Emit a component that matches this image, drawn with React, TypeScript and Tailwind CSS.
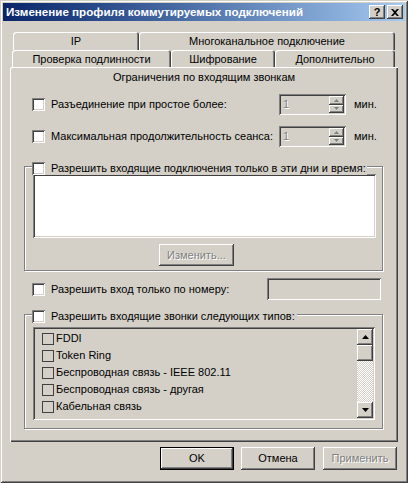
import React from 'react'

const raised = 'shadow-[inset_-1px_-1px_#404040,inset_1px_1px_#ffffff,inset_-2px_-2px_#808080,inset_2px_2px_#d4d0c8]'
const sunken = 'shadow-[inset_1px_1px_#808080,inset_-1px_-1px_#ffffff,inset_2px_2px_#404040,inset_-2px_-2px_#d4d0c8]'
const etched = 'border border-[#808080] shadow-[inset_1px_1px_#ffffff,1px_1px_#ffffff]'
const disabledText = 'text-[#808080] [text-shadow:1px_1px_#ffffff]'

function CheckBox() {
    return <div className={`w-[13px] h-[13px] shrink-0 bg-white ${sunken}`} />
}

function Arrow({ up, color = '#000000', size = 'big' }: { up: boolean; color?: string; size?: 'big' | 'small' }) {
    if (size === 'small') {
        return (
            <svg width="5" height="3" viewBox="0 0 5 3">
                <path d={up ? 'M2.5 0 L5 3 L0 3 Z' : 'M0 0 L5 0 L2.5 3 Z'} fill={color} />
            </svg>
        )
    }
    return (
        <svg width="7" height="4" viewBox="0 0 7 4">
            <path d={up ? 'M3.5 0 L7 4 L0 4 Z' : 'M0 0 L7 0 L3.5 4 Z'} fill={color} />
        </svg>
    )
}

function SpinBox() {
    return (
        <div className={`flex w-[67px] h-[21px] bg-[#d4d0c8] p-[2px] ${sunken}`}>
            <div className={`flex-1 pl-[2px] leading-[17px] ${disabledText}`}>1</div>
            <div className="flex flex-col w-[15px]">
                <div className={`flex-1 flex items-center justify-center ${raised}`}>
                    <Arrow up size="small" color="#808080" />
                </div>
                <div className={`flex-1 flex items-center justify-center ${raised}`}>
                    <Arrow up={false} size="small" color="#808080" />
                </div>
            </div>
        </div>
    )
}

function Tab({ label, width, height }: { label: string; width: number; height: number }) {
    return (
        <div
            className="flex items-center justify-center rounded-t-[3px] shadow-[inset_1px_1px_#ffffff,inset_-1px_0_#404040,inset_-2px_0_#808080] pt-[1px]"
            style={{ width, height }}
        >
            {label}
        </div>
    )
}

function Button({ label, isDefault, disabled }: { label: string; isDefault?: boolean; disabled?: boolean }) {
    const border = isDefault
        ? 'shadow-[inset_0_0_0_1px_#000000,inset_-2px_-2px_#404040,inset_2px_2px_#ffffff,inset_-3px_-3px_#808080]'
        : raised
    return (
        <div className={`w-[74px] h-[23px] flex items-center justify-center ${border} ${disabled ? disabledText : 'text-black'}`}>
            {label}
        </div>
    )
}

const deviceTypes = [
    'FDDI',
    'Token Ring',
    'Беспроводная связь - IEEE 802.11',
    'Беспроводная связь - другая',
    'Кабельная связь',
]

export default function App() {
    return (
        <div className="w-[408px] h-[483px] bg-[#d4d0c8] flex flex-col font-['Liberation_Sans',Arial,sans-serif] text-[11px] text-black shadow-[inset_1px_1px_#d4d0c8,inset_-1px_-1px_#404040,inset_2px_2px_#ffffff,inset_-2px_-2px_#808080] overflow-hidden">
            {/* Title bar */}
            <div className="mt-[3px] mx-[3px] h-[18px] flex items-center bg-gradient-to-r from-[#0a246a] to-[#a6caf0] pl-[3px] pr-[2px]">
                <span className="flex-1 text-white font-bold text-[11.6px] leading-none whitespace-nowrap">
                    Изменение профиля коммутируемых подключений
                </span>
                <div className={`w-[16px] h-[14px] flex items-center justify-center bg-[#d4d0c8] font-bold text-[11px] leading-none ${raised}`}>?</div>
                <div className={`ml-[2px] w-[16px] h-[14px] flex items-center justify-center bg-[#d4d0c8] ${raised}`}>
                    <svg width="8" height="7" viewBox="0 0 8 7">
                        <path d="M0 0 H2 L4 2 L6 0 H8 L5 3.5 L8 7 H6 L4 5 L2 7 H0 L3 3.5 Z" fill="#000" />
                    </svg>
                </div>
            </div>

            {/* Tabs */}
            <div className="mt-[11px] ml-[13px] flex">
                <Tab label="IP" width={126} height={18} />
                <Tab label="Многоканальное подключение" width={256} height={18} />
            </div>
            <div className="ml-[12px] flex">
                <Tab label="Проверка подлинности" width={159} height={17} />
                <Tab label="Шифрование" width={104} height={17} />
                <Tab label="Дополнительно" width={120} height={17} />
            </div>

            {/* Panel */}
            <div className="ml-[10px] w-[388px] h-[375px] flex flex-col rounded-tl-[2px] shadow-[inset_1px_1px_#ffffff,inset_-1px_-1px_#404040,inset_-2px_-2px_#808080]">
                <div className="h-[20px] flex items-center justify-center">Ограничения по входящим звонкам</div>

                <div className="mt-[7px] h-[21px] pl-[22px] flex items-center">
                    <CheckBox />
                    <span className="ml-[6px] w-[228px] whitespace-nowrap">Разъединение при простое более:</span>
                    <SpinBox />
                    <span className="ml-[8px]">мин.</span>
                </div>

                <div className="mt-[11px] h-[21px] pl-[22px] flex items-center">
                    <CheckBox />
                    <span className="ml-[6px] w-[228px] whitespace-nowrap">Максимальная продолжительность сеанса:</span>
                    <SpinBox />
                    <span className="ml-[8px]">мин.</span>
                </div>

                {/* Days and times group */}
                <div className={`relative mt-[19px] ml-[14px] w-[359px] h-[105px] flex flex-col ${etched}`}>
                    <div className="absolute -top-[5px] left-[7px] flex items-center bg-[#d4d0c8] pr-[1px] h-[13px]">
                        <CheckBox />
                        <span className="ml-[6px] whitespace-nowrap">Разрешить входящие подключения только в эти дни и время:</span>
                    </div>
                    <div className={`mt-[7px] ml-[8px] w-[343px] h-[64px] bg-white ${sunken}`} />
                    <div className="mt-[6px] ml-[134px]">
                        <div className={`w-[75px] h-[22px] flex items-center justify-center ${raised} ${disabledText}`}>Изменить...</div>
                    </div>
                </div>

                <div className="mt-[7px] h-[22px] pl-[22px] flex items-center">
                    <CheckBox />
                    <span className="ml-[6px] w-[216px] whitespace-nowrap">Разрешить вход только по номеру:</span>
                    <div className={`w-[114px] h-[22px] bg-[#d4d0c8] ${sunken}`} />
                </div>

                {/* Device types group */}
                <div className={`relative mt-[14px] ml-[14px] w-[359px] h-[115px] flex flex-col ${etched}`}>
                    <div className="absolute -top-[5px] left-[7px] flex items-center bg-[#d4d0c8] pr-[2px] h-[13px]">
                        <CheckBox />
                        <span className="ml-[6px] whitespace-nowrap">Разрешить входящие звонки следующих типов:</span>
                    </div>
                    <div className={`mt-[12px] ml-[8px] w-[342px] h-[93px] flex p-[2px] bg-[#d4d0c8] ${sunken}`}>
                        <div className="flex-1 flex flex-col pt-[1px] pl-[7px]">
                            {deviceTypes.map((t) => (
                                <div key={t} className="h-[17px] flex items-center">
                                    <div className="w-[12px] h-[12px] border border-[#404040] bg-[#d4d0c8]" />
                                    <span className="ml-[2px] whitespace-nowrap">{t}</span>
                                </div>
                            ))}
                        </div>
                        <div className="w-[16px] flex flex-col">
                            <div className={`h-[16px] flex items-center justify-center ${raised}`}>
                                <Arrow up />
                            </div>
                            <div className={`h-[16px] ${raised}`} />
                            <div className="flex-1 bg-[image:repeating-conic-gradient(#d4d0c8_0_25%,#ffffff_0_50%)] bg-[length:2px_2px]" />
                            <div className={`h-[16px] flex items-center justify-center ${raised}`}>
                                <Arrow up={false} />
                            </div>
                        </div>
                    </div>
                </div>
            </div>

            {/* Dialog buttons */}
            <div className="mt-[5px] ml-[160px] flex gap-[7px]">
                <Button label="OK" isDefault />
                <Button label="Отмена" />
                <div className="ml-[1px]">
                    <Button label="Применить" disabled />
                </div>
            </div>
        </div>
    )
}
